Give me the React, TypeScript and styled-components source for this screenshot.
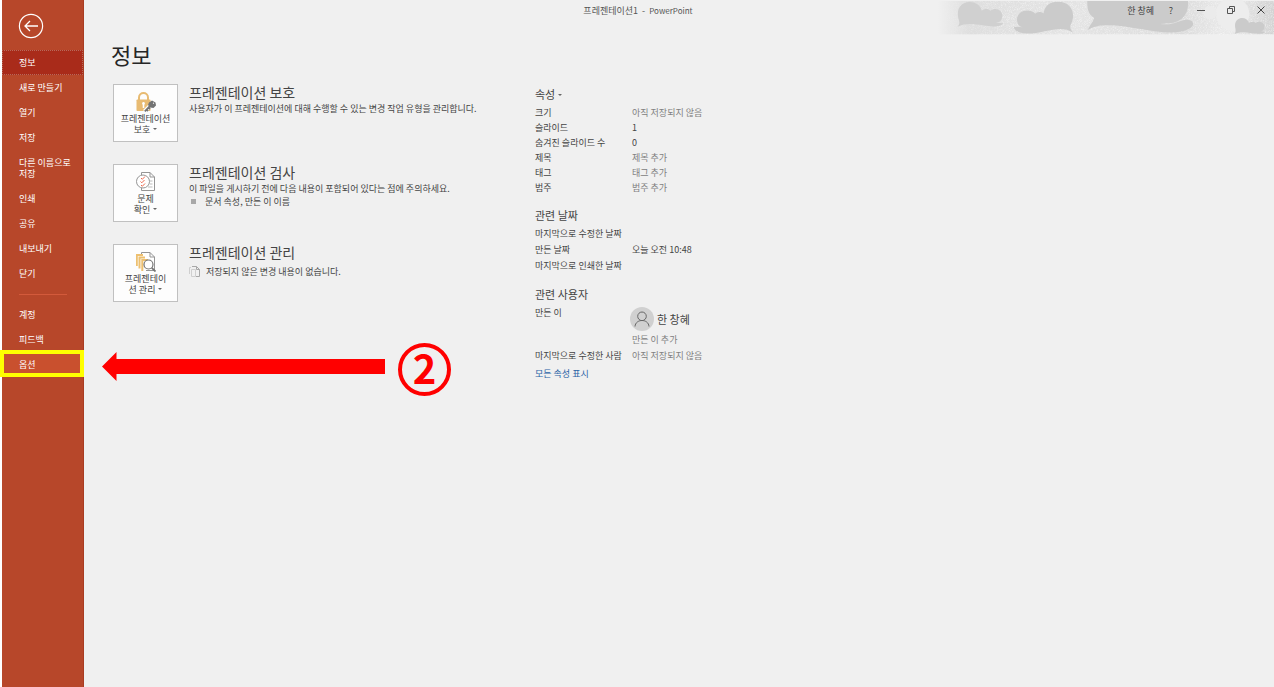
import React from "react";
import styled, { createGlobalStyle } from "styled-components";

const GlobalStyle = createGlobalStyle`
  *, *::before, *::after { box-sizing: border-box; }
  body {
    margin: 0;
    background: #f0f0f0;
    color: #444;
    font-family: "Noto Sans CJK KR", sans-serif;
    font-size: 9px;
    line-height: 13px;
  }
  button { font: inherit; color: inherit; cursor: pointer; }
  h1, h2, h3, p, dl, dd, ul { margin: 0; padding: 0; font-weight: 400; }
  svg { display: block; flex: none; }
`;

const Page = styled.div`
  position: relative;
  display: grid;
  grid-template-columns: 84px 1fr;
  grid-template-rows: 35px 1fr;
  min-height: 100vh;
`;

/* Title bar */

const TitleBar = styled.header`
  grid-area: 1 / 1 / 2 / 3;
  position: relative;
  display: grid;
  grid-template-columns: 1fr auto 1fr;
  align-items: start;
  padding-left: 2px;
`;

const Artwork = styled.svg`
  position: absolute;
  top: 0;
  right: 0;
`;

const DocumentTitle = styled.p`
  grid-column: 2;
  line-height: 21px;
  color: #555;
  white-space: pre;
`;

const AppName = styled.span`
  font-size: 8px;
`;

const WindowTools = styled.div`
  position: relative;
  display: flex;
  justify-content: flex-end;
  align-items: center;
  gap: 4px;
  height: 20px;
`;

const AccountButton = styled.button`
  padding: 0;
  border: 0;
  background: none;
`;

const ToolButton = styled.button`
  display: flex;
  align-items: center;
  justify-content: center;
  width: 26px;
  height: 20px;
  padding: 0;
  border: 0;
  background: none;
`;

/* Sidebar */

const Sidebar = styled.nav`
  grid-area: 1 / 1 / 3 / 2;
  z-index: 1;
  display: flex;
  flex-direction: column;
  border-left: 2px solid #fff;
  border-right: 1px solid #a93c22;
  background: #b7472a;
  color: #fff;
`;

const BackButton = styled.button`
  display: flex;
  align-items: center;
  height: 50px;
  padding: 2px 0 0 16px;
  border: 0;
  background: none;
`;

const MenuItem = styled.button<{ $state?: "current" | "hover" }>`
  position: relative;
  min-height: 25px;
  padding: 7px 10px 7px 17px;
  border: 0;
  background: ${(p) => (p.$state === "current" ? "#a92b1a" : p.$state === "hover" ? "#c9502e" : "none")};
  outline: ${(p) => (p.$state === "current" ? "1px dotted #b8695a" : "none")};
  outline-offset: -1px;
  line-height: 11px;
  text-align: left;
  word-break: keep-all;
`;

const Highlight = styled.span`
  position: absolute;
  inset: -2px -1px 0 -2px;
  border: 4px solid #ff0;
`;

const Divider = styled.hr`
  width: 48px;
  height: 1px;
  margin: 8px 0 7px 17px;
  border: 0;
  background: #d35a3b;
`;

/* Content */

const Content = styled.main`
  grid-area: 2 / 2 / 3 / 3;
  padding: 4px 27px 27px;
`;

const PageHeading = styled.h1`
  margin-bottom: 15px;
  font-size: 22px;
  line-height: 30px;
  color: #262626;
`;

const Columns = styled.div`
  display: grid;
  grid-template-columns: 422px minmax(180px, 1fr);
  align-items: start;
  padding-left: 2px;
`;

const Tasks = styled.div`
  display: flex;
  flex-direction: column;
  gap: 22px;
`;

const Task = styled.section`
  display: flex;
  gap: 11px;
`;

const TaskButton = styled.button`
  display: flex;
  flex-direction: column;
  align-items: center;
  gap: 1px;
  flex: none;
  width: 65px;
  height: 58px;
  padding: 7px 0 0;
  border: 1px solid #c0c0c0;
  background: #fdfdfd;
  line-height: 11px;
`;

const Caret = styled.span`
  display: inline-block;
  margin-left: 3px;
  border: 2px solid transparent;
  border-top-color: #666;
  border-bottom: 0;
  vertical-align: 3px;
`;

const TaskTitle = styled.h2`
  margin-bottom: 2px;
  font-size: 14px;
  line-height: 16px;
`;

const BulletList = styled.ul`
  list-style: none;
`;

const Bullet = styled.li`
  display: flex;
  align-items: center;
  gap: 9px;
  padding-left: 2px;

  &::before {
    content: "";
    width: 5px;
    height: 5px;
    background: #a8a8a8;
  }
`;

const Status = styled.p`
  display: flex;
  align-items: center;
  gap: 6px;
  margin-top: 5px;
`;

/* Properties */

const Properties = styled.aside`
  padding-top: 2px;
`;

const GroupTitle = styled.h3`
  margin-bottom: 3px;
  font-size: 11px;
  line-height: 16px;

  dl + & { margin-top: 12px; }
`;

const GroupButton = styled.button`
  padding: 0;
  border: 0;
  background: none;
`;

const Group = styled.dl<{ $row: number }>`
  line-height: ${(p) => p.$row}px;
`;

const Row = styled.div`
  display: grid;
  grid-template-columns: 97px 1fr;
`;

const Value = styled.dd<{ $muted?: boolean }>`
  color: ${(p) => (p.$muted ? "#808080" : "#444")};
`;

const Person = styled.div`
  display: flex;
  align-items: center;
  gap: 3px;
  margin: 2px 0 1px -2px;
  font-size: 11px;
  color: #444;
`;

const AllLink = styled.a`
  display: inline-block;
  margin-top: 2px;
  line-height: 16px;
  color: #2b63a6;
  text-decoration: none;
`;

/* Annotations drawn over the page */

const Arrow = styled.svg`
  position: absolute;
  top: 352px;
  left: 102px;
`;

const StepNumber = styled.div`
  position: absolute;
  top: 343px;
  left: 398px;
  width: 53px;
  height: 53px;
  border: 4px solid #f00;
  border-radius: 50%;
  color: #f00;
  font-size: 40px;
  font-weight: 700;
  line-height: 41px;
  text-align: center;
`;

const CloudArtwork = () => (
  <Artwork width="354" height="35" viewBox="0 0 1062 105" aria-hidden="true">
    <defs>
      <linearGradient id="wash" x1="0" x2="1" y1="0" y2="0">
        <stop offset="0.05" stopColor="#dedede" stopOpacity="0" />
        <stop offset="0.14" stopColor="#dedede" />
        <stop offset="0.45" stopColor="#e3e3e3" />
        <stop offset="0.75" stopColor="#dcdcdc" />
        <stop offset="0.87" stopColor="#eaeaea" />
        <stop offset="1" stopColor="#d2d2d2" />
      </linearGradient>
      <linearGradient id="fade" x1="0" x2="1" y1="0" y2="0">
        <stop offset="0.05" stopColor="#000" />
        <stop offset="0.25" stopColor="#fff" />
      </linearGradient>
      <mask id="fadeMask">
        <rect width="1062" height="105" fill="url(#fade)" />
      </mask>
      <filter id="speckle" x="0" y="0" width="100%" height="100%">
        <feTurbulence type="fractalNoise" baseFrequency="0.5" numOctaves="2" seed="4" />
        <feColorMatrix values="0 0 0 0 1  0 0 0 0 1  0 0 0 0 1  2.4 0 0 0 -1" />
      </filter>
    </defs>
    <rect y="3" width="1062" height="100" fill="url(#wash)" />
    <rect y="3" width="1062" height="100" filter="url(#speckle)" opacity="0.5" mask="url(#fadeMask)" />
    <circle cx="938" cy="42" r="50" fill="#ededed" />
    <circle cx="870" cy="38" r="20" fill="#ebebeb" />
    <g fill="#cbcbcb">
      <path fill="#d0d0d0" d="M113 80C121 71 118 66 115 55C108 25 124 6 149 6C171 6 183 20 185 32C194 24 207 26 211 32C228 20 249 32 247 49C246 62 239 68 227 68L251 70C238 84 215 80 188 76C160 71 134 69 113 80Z" />
      <path d="M460 98C451 88 448 82 454 70C466 45 459 5 413 5C388 5 374 18 371 40C359 33 350 37 346 41C329 23 291 31 291 59C291 74 300 80 309 82L281 80C286 100 311 103 348 99C391 93 425 76 460 98Z" />
      <path d="M502 3H804C806 34 794 60 760 68L721 72C765 77 779 58 803 59C822 60 824 76 811 84C776 106 720 97 668 88C604 78 536 65 503 91C509 74 523 61 522 53C504 44 501 22 502 3Z" />
      <path d="M944 102C950 91 945 88 945 75C946 50 980 46 987 69C994 64 1002 64 1007 69C1019 60 1037 69 1033 84C1032 91 1027 94 1020 94L1035 96C1027 103 1015 102 997 100C979 96 958 94 944 102Z" />
    </g>
  </Artwork>
);

const BackIcon = () => (
  <svg width="26" height="26" viewBox="0 0 26 26" fill="none" stroke="#fff">
    <circle cx="13" cy="13" r="11.6" strokeWidth="1.2" />
    <path d="M20 13H7M12 8L7 13L12 18" strokeWidth="1.3" />
  </svg>
);

const LockIcon = () => (
  <svg width="20" height="20" viewBox="0 0 20 20">
    <path d="M3 8V5.500C3 -0.500 12 -0.500 12 5.500V8" fill="none" stroke="#e8bb72" strokeWidth="2" />
    <rect x="0.500" y="7.500" width="14" height="11.500" rx="0.800" fill="#e8bb72" />
    <path d="M7.500 10a1.500 1.500 0 0 1 .8 2.700V16H6.700V12.700A1.500 1.500 0 0 1 7.500 10Z" fill="#fff" />
    <path d="M8.500 19.500L14.500 13.500" stroke="#fdfdfd" strokeWidth="4" />
    <path d="M8.800 19.300L15 13M10.500 17.500L12 19M12.500 15.500L14 17" stroke="#737373" strokeWidth="1.800" />
    <path d="M13 10.500L16 8.500L19.500 10.500L20 13.500L17.500 16L14 15.500L12 13Z" fill="#737373" />
    <circle cx="17.500" cy="11.200" r="0.600" fill="#fff" />
  </svg>
);

const InspectIcon = () => (
  <svg width="20" height="20" viewBox="0 0 20 20" fill="none" stroke="#959595">
    <path d="M5.500 3V0.500H14L18.500 5V18.500H5.500V16M14 0.500V5H18.500" fill="#fff" />
    <path d="M14 9H16.500M14 12H16.500M12 15H16.500" stroke="#bbb" />
    <circle cx="7" cy="9.500" r="6.500" fill="#fff" />
    <path d="M5 6L6.300 7.300L9 4.500M4.500 9.500L5.800 10.800L8.500 8M5 13L6.300 14.300L9 11.500" stroke="#ee6a50" />
  </svg>
);

const ManageIcon = () => (
  <svg width="20" height="20" viewBox="0 0 20 20" fill="none" stroke="#959595">
    <path d="M5.500 3V0.500H14L18.500 5V18.500H10M14 0.500V5H18.500" fill="#fff" />
    <path d="M0.800 14V3H7M3.500 16.500V5.500H9M6.300 19V8H12" stroke="#edc070" strokeWidth="2" />
    <circle cx="12.500" cy="12.500" r="4.500" fill="#fff" stroke="#737373" strokeWidth="1.200" />
    <path d="M15.800 15.800L19.500 19.500" stroke="#737373" strokeWidth="1.800" />
  </svg>
);

const VersionIcon = () => (
  <svg width="11" height="12" viewBox="0 0 11 12" fill="none" stroke="#a8a8a8">
    <path d="M3 0.500H7.500L10.500 3.500V10.500H7M7.500 0.500V3.500H10.500" />
    <path d="M0.500 8V1.500H2M2.500 10.500V3.500H6.500V10.500H2.500" stroke="#cfcfcf" />
  </svg>
);

const Avatar = () => (
  <svg width="24" height="24" viewBox="0 0 24 24" fill="none" stroke="#666">
    <circle cx="12" cy="12" r="12" fill="#d0d0d0" stroke="none" />
    <circle cx="12" cy="9.300" r="4.300" />
    <path d="M5 19.500C5.500 11.500 18.500 11.500 19 19.500" />
  </svg>
);

const mainMenu = ["새로 만들기", "열기", "저장", "다른 이름으로 저장", "인쇄", "공유", "내보내기", "닫기"];

const fileProperties: [string, string, boolean][] = [
  ["크기", "아직 저장되지 않음", true],
  ["슬라이드", "1", false],
  ["숨겨진 슬라이드 수", "0", false],
  ["제목", "제목 추가", true],
  ["태그", "태그 추가", true],
  ["범주", "범주 추가", true],
];

const dateProperties: [string, string][] = [
  ["마지막으로 수정한 날짜", ""],
  ["만든 날짜", "오늘 오전 10:48"],
  ["마지막으로 인쇄한 날짜", ""],
];

export default function App() {
  return (
    <>
      <GlobalStyle />
      <Page>
        <TitleBar>
          <CloudArtwork />
          <DocumentTitle>{"프레젠테이션1  -  "}<AppName>PowerPoint</AppName></DocumentTitle>
          <WindowTools>
            <AccountButton>한 창혜</AccountButton>
            <ToolButton>?</ToolButton>
            <ToolButton aria-label="최소화">
              <svg width="8" height="8" viewBox="0 0 8 8" stroke="#555"><path d="M0 4.500H8" /></svg>
            </ToolButton>
            <ToolButton aria-label="이전 크기로 복원">
              <svg width="8" height="8" viewBox="0 0 8 8" stroke="#555" fill="none">
                <path d="M0.500 2.500H5.500V7.500H0.500ZM2.500 2.500V0.500H7.500V5.500H5.500" />
              </svg>
            </ToolButton>
            <ToolButton aria-label="닫기">
              <svg width="8" height="8" viewBox="0 0 8 8" stroke="#444"><path d="M0.500 0.500L7.500 7.500M7.500 0.500L0.500 7.500" /></svg>
            </ToolButton>
          </WindowTools>
        </TitleBar>

        <Sidebar>
          <BackButton aria-label="뒤로"><BackIcon /></BackButton>
          <MenuItem $state="current" aria-current="page">정보</MenuItem>
          {mainMenu.map((label) => <MenuItem key={label}>{label}</MenuItem>)}
          <Divider />
          <MenuItem>계정</MenuItem>
          <MenuItem>피드백</MenuItem>
          <MenuItem $state="hover">옵션<Highlight /></MenuItem>
        </Sidebar>

        <Content>
          <PageHeading>정보</PageHeading>
          <Columns>
            <Tasks>
              <Task>
                <TaskButton>
                  <LockIcon />
                  <span>프레젠테이션<br />보호<Caret /></span>
                </TaskButton>
                <div>
                  <TaskTitle>프레젠테이션 보호</TaskTitle>
                  <p>사용자가 이 프레젠테이션에 대해 수행할 수 있는 변경 작업 유형을 관리합니다.</p>
                </div>
              </Task>
              <Task>
                <TaskButton>
                  <InspectIcon />
                  <span>문제<br />확인<Caret /></span>
                </TaskButton>
                <div>
                  <TaskTitle>프레젠테이션 검사</TaskTitle>
                  <p>이 파일을 게시하기 전에 다음 내용이 포함되어 있다는 점에 주의하세요.</p>
                  <BulletList><Bullet>문서 속성, 만든 이 이름</Bullet></BulletList>
                </div>
              </Task>
              <Task>
                <TaskButton>
                  <ManageIcon />
                  <span>프레젠테이<br />션 관리<Caret /></span>
                </TaskButton>
                <div>
                  <TaskTitle>프레젠테이션 관리</TaskTitle>
                  <Status><VersionIcon />저장되지 않은 변경 내용이 없습니다.</Status>
                </div>
              </Task>
            </Tasks>

            <Properties>
              <GroupTitle><GroupButton>속성<Caret /></GroupButton></GroupTitle>
              <Group $row={15}>
                {fileProperties.map(([label, value, muted]) => (
                  <Row key={label}><dt>{label}</dt><Value $muted={muted}>{value}</Value></Row>
                ))}
              </Group>
              <GroupTitle>관련 날짜</GroupTitle>
              <Group $row={16}>
                {dateProperties.map(([label, value]) => (
                  <Row key={label}><dt>{label}</dt><Value>{value}</Value></Row>
                ))}
              </Group>
              <GroupTitle>관련 사용자</GroupTitle>
              <Group $row={16}>
                <Row>
                  <dt>만든 이</dt>
                  <Value $muted>
                    <Person><Avatar />한 창혜</Person>
                    만든 이 추가
                  </Value>
                </Row>
                <Row><dt>마지막으로 수정한 사람</dt><Value $muted>아직 저장되지 않음</Value></Row>
              </Group>
              <AllLink href="#properties">모든 속성 표시</AllLink>
            </Properties>
          </Columns>
        </Content>

        <Arrow width="283" height="29" viewBox="0 0 283 29" aria-hidden="true">
          <path d="M0 14.500L14.500 0V7H283V22H14.500V29Z" fill="#f00" />
        </Arrow>
        <StepNumber>2</StepNumber>
      </Page>
    </>
  );
}
